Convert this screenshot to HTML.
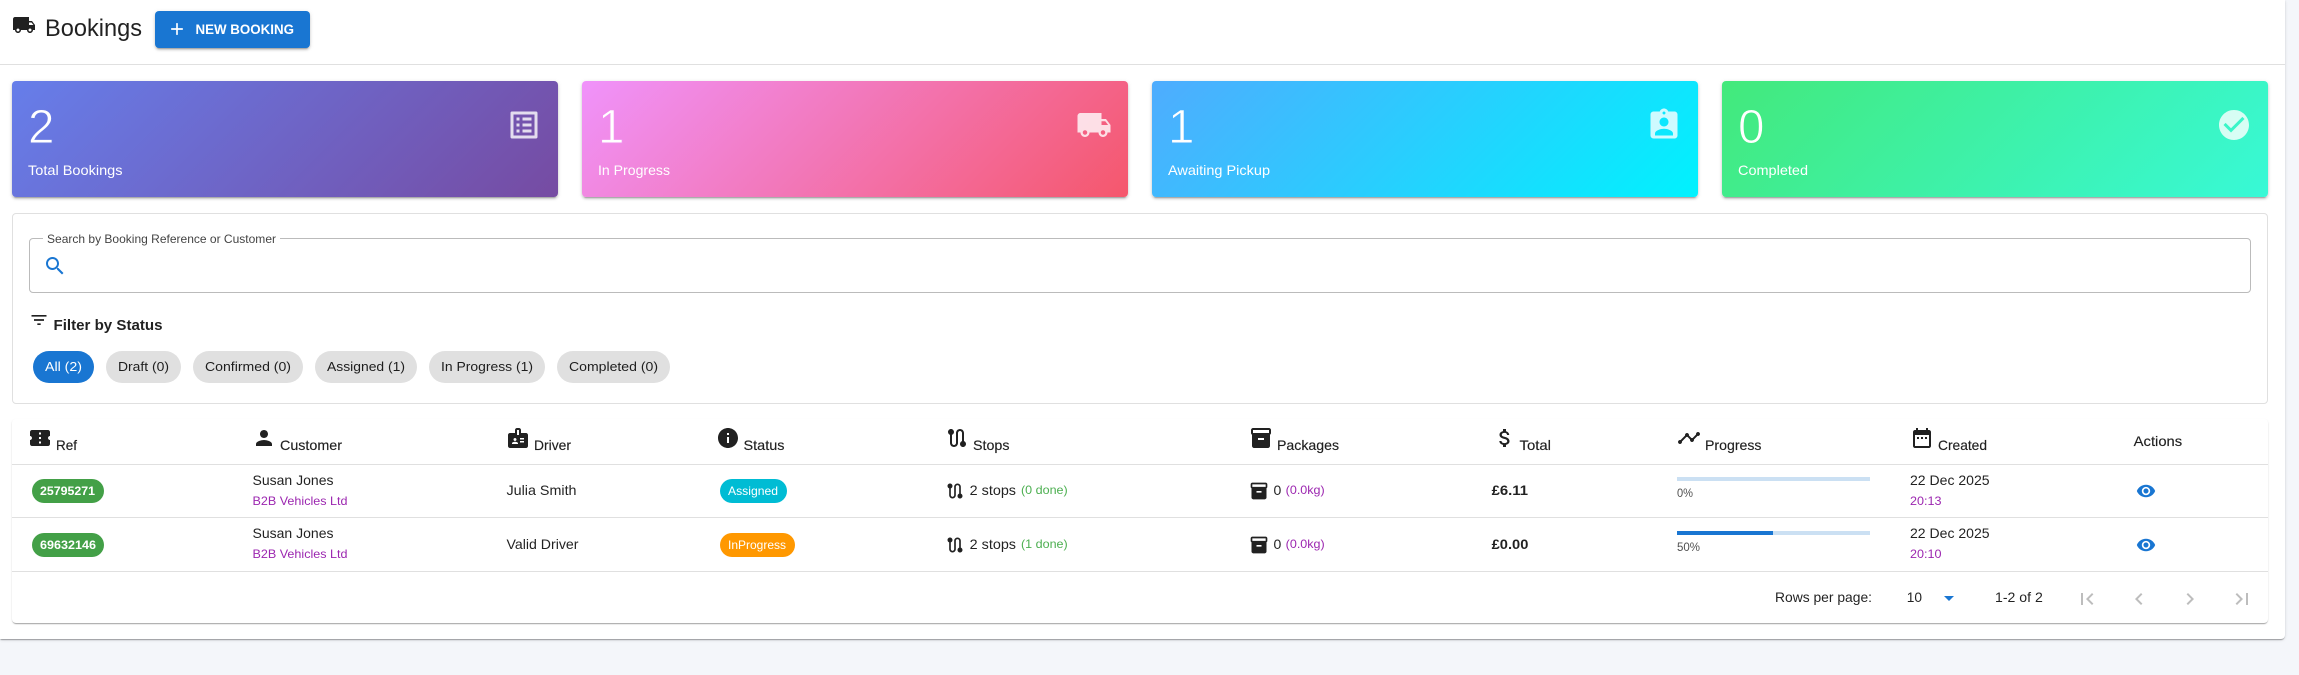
<!DOCTYPE html>
<html lang="en">
<head>
<meta charset="utf-8">
<title>Bookings</title>
<style>
html,body{margin:0;padding:0;width:2299px;height:675px;overflow:hidden;background:#f4f6fa;font-family:"Liberation Sans",sans-serif}
.b{position:absolute;box-sizing:border-box}
.panel{left:0;top:0;width:2285px;height:639px;background:#fff;border-radius:0 0 4px 0;box-shadow:0 2px 1px -1px rgba(0,0,0,.2),0 1px 1px rgba(0,0,0,.14),0 1px 3px rgba(0,0,0,.12)}
.line{background:#e0e0e0;height:1px}
.btn{left:155px;top:11px;width:155px;height:37px;background:#1976d2;border-radius:4px;box-shadow:0 3px 1px -2px rgba(0,0,0,.2),0 2px 2px rgba(0,0,0,.14),0 1px 5px rgba(0,0,0,.12)}
.card{top:81px;height:116px;width:546px;border-radius:4px;box-shadow:0 3px 1px -2px rgba(0,0,0,.2),0 2px 2px rgba(0,0,0,.14),0 1px 5px rgba(0,0,0,.12)}
.filter{left:12px;top:213px;width:2256px;height:191px;border:1px solid #e0e0e0;border-radius:4px}
.search{left:29px;top:238px;width:2222px;height:55px;border:1px solid #bbb;border-radius:4px}
.notch{left:43px;top:236px;width:237px;height:5px;background:#fff}
.chip{top:351px;height:32px;border-radius:16px;background:#e0e0e0}
.table{left:12px;top:419px;width:2256px;height:204px;background:#fff;border-radius:4px;box-shadow:0 2px 1px -1px rgba(0,0,0,.2),0 1px 1px rgba(0,0,0,.14),0 1px 2px rgba(0,0,0,.08)}
.pill{height:24px;border-radius:12px}
.track{left:1677px;width:193px;height:4px;background:#cbe0f3}
svg{position:absolute;left:0;top:0}
text{font-family:"Liberation Sans",sans-serif;fill:rgba(0,0,0,.87)}
.wh{fill:#fff}
.th{font-size:14px;font-weight:400;stroke:rgba(0,0,0,.5);stroke-width:.25px}
.td{font-size:14px}
.sm{font-size:12px}
.pu{font-size:12px;fill:#9c27b0}
.gr{font-size:12px;fill:#4caf50}
.ch{font-size:13px}
.ic{fill:rgba(0,0,0,.87)}
.ci{fill:#fff;fill-opacity:.8}
.bl{fill:#1976d2}
.gy{fill:#bdbdbd}
.num{font-size:48px;fill:#fff;stroke-width:.9px;paint-order:fill}
</style>
</head>
<body>
<div class="b panel"></div>
<div class="b line" style="left:0;top:64px;width:2285px"></div>
<div class="b btn"></div>
<div class="b card" style="left:12px;background:linear-gradient(135deg,#667eea,#764ba2)"></div>
<div class="b card" style="left:582px;background:linear-gradient(135deg,#f093fb,#f5576c)"></div>
<div class="b card" style="left:1152px;background:linear-gradient(135deg,#4facfe,#00f2fe)"></div>
<div class="b card" style="left:1722px;background:linear-gradient(135deg,#43e97b,#38f9d7)"></div>
<div class="b filter"></div>
<div class="b search"></div>
<div class="b notch"></div>
<div class="b chip" style="left:33px;width:61px;background:#1976d2"></div>
<div class="b chip" style="left:106px;width:75px"></div>
<div class="b chip" style="left:193px;width:110px"></div>
<div class="b chip" style="left:315px;width:102px"></div>
<div class="b chip" style="left:429px;width:116px"></div>
<div class="b chip" style="left:557px;width:113px"></div>
<div class="b table"></div>
<div class="b line" style="left:12px;top:464px;width:2256px"></div>
<div class="b line" style="left:12px;top:517px;width:2256px"></div>
<div class="b line" style="left:12px;top:571px;width:2256px"></div>
<div class="b pill" style="left:32px;top:479px;width:72px;background:#43a047"></div>
<div class="b pill" style="left:32px;top:533px;width:72px;background:#43a047"></div>
<div class="b pill" style="left:720px;top:479px;width:67px;background:#00bcd4"></div>
<div class="b pill" style="left:720px;top:533px;width:75px;background:#ff9800"></div>
<div class="b track" style="top:477px"></div>
<div class="b track" style="top:531px"></div>
<div class="b" style="left:1677px;top:531px;width:96px;height:4px;background:#1976d2"></div>

<svg width="2299" height="675" viewBox="0 0 2299 675" xmlns="http://www.w3.org/2000/svg">
<defs>
<symbol id="truck" viewBox="0 0 24 24"><path d="M20 8h-3V4H3c-1.1 0-2 .9-2 2v11h2c0 1.66 1.34 3 3 3s3-1.34 3-3h6c0 1.66 1.34 3 3 3s3-1.34 3-3h2v-5l-3-4zM6 18.5c-.83 0-1.5-.67-1.5-1.5s.67-1.5 1.5-1.5 1.5.67 1.5 1.5-.67 1.5-1.5 1.5zm13.5-9 1.96 2.5H17V9.5h2.5zm-1.5 9c-.83 0-1.5-.67-1.5-1.5s.67-1.5 1.5-1.5 1.5.67 1.5 1.5-.67 1.5-1.5 1.5z"/></symbol>
<symbol id="plus" viewBox="0 0 24 24"><path d="M19 13h-6v6h-2v-6H5v-2h6V5h2v6h6v2z"/></symbol>
<symbol id="list" viewBox="0 0 24 24"><path d="M19 5v14H5V5h14m1.1-2H3.9c-.5 0-.9.4-.9.9v16.2c0 .4.4.9.9.9h16.2c.4 0 .9-.5.9-.9V3.9c0-.5-.5-.9-.9-.9zM11 7h6v2h-6V7zm0 4h6v2h-6v-2zm0 4h6v2h-6zM7 7h2v2H7zm0 4h2v2H7zm0 4h2v2H7z"/></symbol>
<symbol id="assign" viewBox="0 0 24 24"><path d="M19 3h-4.18C14.4 1.84 13.3 1 12 1c-1.3 0-2.4.84-2.82 2H5c-1.1 0-2 .9-2 2v14c0 1.1.9 2 2 2h14c1.1 0 2-.9 2-2V5c0-1.1-.9-2-2-2zm-7 0c.55 0 1 .45 1 1s-.45 1-1 1-1-.45-1-1 .45-1 1-1zm0 4c1.66 0 3 1.34 3 3s-1.34 3-3 3-3-1.34-3-3 1.34-3 3-3zm6 12H6v-1.4c0-2 4-3.1 6-3.1s6 1.1 6 3.1V19z"/></symbol>
<symbol id="check" viewBox="0 0 24 24"><path d="M12 2C6.48 2 2 6.48 2 12s4.48 10 10 10 10-4.48 10-10S17.52 2 12 2zm-2 15l-5-5 1.41-1.41L10 14.17l7.59-7.59L19 8l-9 9z"/></symbol>
<symbol id="search" viewBox="0 0 24 24"><path d="M15.5 14h-.79l-.28-.27C15.41 12.59 16 11.11 16 9.5 16 5.91 13.09 3 9.5 3S3 5.91 3 9.5 5.91 16 9.5 16c1.61 0 3.09-.59 4.23-1.57l.27.28v.79l5 4.99L20.49 19l-4.99-5zm-6 0C7.01 14 5 11.99 5 9.5S7.01 5 9.5 5 14 7.01 14 9.5 11.99 14 9.5 14z"/></symbol>
<symbol id="filter" viewBox="0 0 24 24"><path d="M10 18h4v-2h-4v2zM3 6v2h18V6H3zm3 7h12v-2H6v2z"/></symbol>
<symbol id="ticket" viewBox="0 0 24 24"><path d="M22 10V6c0-1.11-.9-2-2-2H4c-1.1 0-1.99.89-1.99 2v4c1.1 0 1.99.9 1.99 2s-.89 2-2 2v4c0 1.1.9 2 2 2h16c1.1 0 2-.9 2-2v-4c-1.1 0-2-.9-2-2s.9-2 2-2zm-9 7.5h-2v-2h2v2zm0-4.5h-2v-2h2v2zm0-4.5h-2v-2h2v2z"/></symbol>
<symbol id="person" viewBox="0 0 24 24"><path d="M12 12c2.21 0 4-1.79 4-4s-1.79-4-4-4-4 1.79-4 4 1.79 4 4 4zm0 2c-2.67 0-8 1.34-8 4v2h16v-2c0-2.66-5.33-4-8-4z"/></symbol>
<symbol id="badge" viewBox="0 0 24 24"><path d="M20 7h-5V4c0-1.1-.9-2-2-2h-2c-1.1 0-2 .9-2 2v3H4c-1.1 0-2 .9-2 2v11c0 1.1.9 2 2 2h16c1.1 0 2-.9 2-2V9c0-1.1-.9-2-2-2zM9 12c.83 0 1.5.67 1.5 1.5S9.83 15 9 15s-1.5-.67-1.5-1.5S8.17 12 9 12zm3 6H6v-.75c0-1 2-1.5 3-1.5s3 .5 3 1.5V18zm1-9h-2V4h2v5zm5 7.5h-4V15h4v1.5zm0-3h-4V12h4v1.5z"/></symbol>
<symbol id="info" viewBox="0 0 24 24"><path d="M12 2C6.48 2 2 6.48 2 12s4.48 10 10 10 10-4.48 10-10S17.52 2 12 2zm1 15h-2v-6h2v6zm0-8h-2V7h2v2z"/></symbol>
<symbol id="route" viewBox="0 0 24 24"><path d="M19 15.18V7c0-2.21-1.79-4-4-4s-4 1.79-4 4v10c0 1.1-.9 2-2 2s-2-.9-2-2V8.82C8.16 8.4 9 7.3 9 6c0-1.66-1.34-3-3-3S3 4.34 3 6c0 1.3.84 2.4 2 2.82V17c0 2.21 1.79 4 4 4s4-1.79 4-4V7c0-1.1.9-2 2-2s2 .9 2 2v8.18c-1.16.41-2 1.51-2 2.82 0 1.66 1.34 3 3 3s3-1.34 3-3c0-1.3-.84-2.4-2-2.82z"/></symbol>
<symbol id="box" viewBox="0 0 24 24"><path d="M20 2H4c-1 0-2 .9-2 2v3.01c0 .72.43 1.34 1 1.69V20c0 1.1 1.1 2 2 2h14c.9 0 2-.9 2-2V8.7c.57-.35 1-.97 1-1.69V4c0-1.1-1-2-2-2zm-5 12H9v-2h6v2zm5-7H4V4l16-.02V7z"/></symbol>
<symbol id="money" viewBox="0 0 24 24"><path d="M11.8 10.9c-2.27-.59-3-1.2-3-2.15 0-1.09 1.01-1.85 2.7-1.85 1.78 0 2.44.85 2.5 2.1h2.21c-.07-1.72-1.12-3.3-3.21-3.81V3h-3v2.16c-1.94.42-3.5 1.68-3.5 3.61 0 2.31 1.91 3.46 4.7 4.13 2.5.6 3 1.48 3 2.41 0 .69-.49 1.79-2.7 1.79-2.06 0-2.87-.92-2.98-2.1h-2.2c.12 2.19 1.76 3.42 3.68 3.83V21h3v-2.15c1.95-.37 3.5-1.5 3.5-3.55 0-2.84-2.43-3.81-4.7-4.4z"/></symbol>
<symbol id="timeline" viewBox="0 0 24 24"><path d="M23 8c0 1.1-.9 2-2 2-.18 0-.35-.02-.51-.07l-3.56 3.55c.05.16.07.34.07.52 0 1.1-.9 2-2 2s-2-.9-2-2c0-.18.02-.36.07-.52l-2.55-2.55c-.16.05-.34.07-.52.07s-.36-.02-.52-.07l-4.55 4.56c.05.16.07.33.07.51 0 1.1-.9 2-2 2s-2-.9-2-2 .9-2 2-2c.18 0 .35.02.51.07l4.56-4.55C8.02 9.36 8 9.18 8 9c0-1.1.9-2 2-2s2 .9 2 2c0 .18-.02.36-.07.52l2.55 2.55c.16-.05.34-.07.52-.07s.36.02.52.07l3.55-3.56C19.02 8.35 19 8.18 19 8c0-1.1.9-2 2-2s2 .9 2 2z"/></symbol>
<symbol id="date" viewBox="0 0 24 24"><path d="M9 11H7v2h2v-2zm4 0h-2v2h2v-2zm4 0h-2v2h2v-2zm2-7h-1V2h-2v2H8V2H6v2H5c-1.11 0-1.99.9-1.99 2L3 20c0 1.1.89 2 2 2h14c1.1 0 2-.9 2-2V6c0-1.1-.9-2-2-2zm0 16H5V9h14v11z"/></symbol>
<symbol id="eye" viewBox="0 0 24 24"><path d="M12 4.5C7 4.5 2.73 7.61 1 12c1.73 4.39 6 7.5 11 7.5s9.27-3.11 11-7.5c-1.73-4.39-6-7.5-11-7.5zM12 17c-2.76 0-5-2.24-5-5s2.24-5 5-5 5 2.24 5 5-2.24 5-5 5zm0-8c-1.66 0-3 1.34-3 3s1.34 3 3 3 3-1.34 3-3-1.34-3-3-3z"/></symbol>
<symbol id="first" viewBox="0 0 24 24"><path d="M18.41 16.59 13.82 12l4.59-4.59L17 6l-6 6 6 6zM6 6h2v12H6z"/></symbol>
<symbol id="prev" viewBox="0 0 24 24"><path d="M15.41 7.41 14 6l-6 6 6 6 1.41-1.41L10.83 12z"/></symbol>
<symbol id="next" viewBox="0 0 24 24"><path d="M10 6 8.59 7.41 13.17 12l-4.58 4.59L10 18l6-6z"/></symbol>
<symbol id="last" viewBox="0 0 24 24"><path d="M5.59 7.41 10.18 12l-4.59 4.59L7 18l6-6-6-6zM16 6h2v12h-2z"/></symbol>
</defs>

<!-- header -->
<use href="#truck" x="12" y="13" width="24" height="24" class="ic"/>
<text x="45" y="36" font-size="24" textLength="97" lengthAdjust="spacingAndGlyphs">Bookings</text>
<use href="#plus" x="167" y="19" width="20" height="20" class="wh"/>
<text x="195.5" y="34" font-size="13.5" font-weight="700" class="wh" textLength="98.5" lengthAdjust="spacingAndGlyphs">NEW BOOKING</text>

<!-- stat cards -->
<text x="28" y="143" class="num" stroke="#6b7ce2" textLength="26.5" lengthAdjust="spacingAndGlyphs">2</text>
<text x="598" y="143" class="num" stroke="#f18fed" textLength="26.5" lengthAdjust="spacingAndGlyphs">1</text>
<text x="1168" y="143" class="num" stroke="#49b2fe" textLength="26.5" lengthAdjust="spacingAndGlyphs">1</text>
<text x="1738" y="143" class="num" stroke="#42eb83" textLength="26.5" lengthAdjust="spacingAndGlyphs">0</text>
<text x="28" y="175" font-size="14" class="wh" textLength="94.5" lengthAdjust="spacingAndGlyphs">Total Bookings</text>
<text x="598" y="175" font-size="14" class="wh" textLength="72" lengthAdjust="spacingAndGlyphs">In Progress</text>
<text x="1168" y="175" font-size="14" class="wh" textLength="102" lengthAdjust="spacingAndGlyphs">Awaiting Pickup</text>
<text x="1738" y="175" font-size="14" class="wh" textLength="70" lengthAdjust="spacingAndGlyphs">Completed</text>
<use href="#list" x="506" y="107" width="36" height="36" class="ci"/>
<use href="#truck" x="1076" y="107" width="36" height="36" class="ci"/>
<use href="#assign" x="1646" y="107" width="36" height="36" class="ci"/>
<use href="#check" x="2216" y="107" width="36" height="36" class="ci"/>

<!-- search + filter -->
<text x="47" y="243" class="sm" textLength="229" lengthAdjust="spacingAndGlyphs" style="fill:rgba(0,0,0,.75)">Search by Booking Reference or Customer</text>
<use href="#search" x="43" y="254" width="24" height="24" class="bl"/>
<use href="#filter" x="29" y="310" width="20" height="20" class="ic"/>
<text x="53.5" y="330" font-size="15" font-weight="700" textLength="109" lengthAdjust="spacingAndGlyphs">Filter by Status</text>
<text x="45" y="371" class="ch wh" textLength="37" lengthAdjust="spacingAndGlyphs">All (2)</text>
<text x="118" y="371" class="ch" textLength="51" lengthAdjust="spacingAndGlyphs">Draft (0)</text>
<text x="205" y="371" class="ch" textLength="86" lengthAdjust="spacingAndGlyphs">Confirmed (0)</text>
<text x="327" y="371" class="ch" textLength="78" lengthAdjust="spacingAndGlyphs">Assigned (1)</text>
<text x="441" y="371" class="ch" textLength="92" lengthAdjust="spacingAndGlyphs">In Progress (1)</text>
<text x="569" y="371" class="ch" textLength="89" lengthAdjust="spacingAndGlyphs">Completed (0)</text>

<!-- table head -->
<use href="#ticket" x="28" y="426" width="24" height="24" class="ic"/>
<text x="56" y="450" class="th" textLength="21" lengthAdjust="spacingAndGlyphs">Ref</text>
<use href="#person" x="252" y="426" width="24" height="24" class="ic"/>
<text x="280" y="450" class="th" textLength="62" lengthAdjust="spacingAndGlyphs">Customer</text>
<use href="#badge" x="506" y="426" width="24" height="24" class="ic"/>
<text x="534" y="450" class="th" textLength="37" lengthAdjust="spacingAndGlyphs">Driver</text>
<use href="#info" x="716" y="426" width="24" height="24" class="ic"/>
<text x="743.5" y="450" class="th" textLength="41" lengthAdjust="spacingAndGlyphs">Status</text>
<use href="#route" x="945" y="426" width="24" height="24" class="ic"/>
<text x="973" y="450" class="th" textLength="36.5" lengthAdjust="spacingAndGlyphs">Stops</text>
<use href="#box" x="1249" y="426" width="24" height="24" class="ic"/>
<text x="1277" y="450" class="th" textLength="62" lengthAdjust="spacingAndGlyphs">Packages</text>
<use href="#money" x="1493" y="426" width="24" height="24" class="ic"/>
<text x="1519.5" y="450" class="th" textLength="31.5" lengthAdjust="spacingAndGlyphs">Total</text>
<use href="#timeline" x="1677" y="426" width="24" height="24" class="ic"/>
<text x="1705" y="450" class="th" textLength="56.5" lengthAdjust="spacingAndGlyphs">Progress</text>
<use href="#date" x="1910" y="426" width="24" height="24" class="ic"/>
<text x="1938" y="450" class="th" textLength="49" lengthAdjust="spacingAndGlyphs">Created</text>
<text x="2133.7" y="446" class="th" textLength="48.5" lengthAdjust="spacingAndGlyphs">Actions</text>

<!-- row 1 -->
<text x="40" y="495" class="sm wh" font-weight="700" textLength="55" lengthAdjust="spacingAndGlyphs">25795271</text>
<text x="252.5" y="485" class="td" textLength="81" lengthAdjust="spacingAndGlyphs">Susan Jones</text>
<text x="252.5" y="505" class="pu" textLength="95" lengthAdjust="spacingAndGlyphs">B2B Vehicles Ltd</text>
<text x="506.5" y="495" class="td" textLength="70" lengthAdjust="spacingAndGlyphs">Julia Smith</text>
<text x="728" y="495" class="sm wh" textLength="50" lengthAdjust="spacingAndGlyphs">Assigned</text>
<use href="#route" x="945" y="481" width="20" height="20" class="ic"/>
<text x="969.7" y="495" class="td" textLength="46.3" lengthAdjust="spacingAndGlyphs">2 stops</text>
<text x="1021" y="494" class="gr" textLength="46.7" lengthAdjust="spacingAndGlyphs">(0 done)</text>
<use href="#box" x="1249" y="481" width="20" height="20" class="ic"/>
<text x="1273.5" y="495" class="td" textLength="7.8" lengthAdjust="spacingAndGlyphs">0</text>
<text x="1285.7" y="494" class="pu" textLength="39" lengthAdjust="spacingAndGlyphs">(0.0kg)</text>
<text x="1491.6" y="495" class="td" font-weight="700" textLength="36.4" lengthAdjust="spacingAndGlyphs">£6.11</text>
<text x="1677" y="497" class="sm" textLength="16" lengthAdjust="spacingAndGlyphs" style="fill:rgba(0,0,0,.7)">0%</text>
<text x="1910" y="485" class="td" textLength="79.6" lengthAdjust="spacingAndGlyphs">22 Dec 2025</text>
<text x="1910" y="505" class="pu" textLength="31.5" lengthAdjust="spacingAndGlyphs">20:13</text>
<use href="#eye" x="2136" y="481" width="20" height="20" class="bl"/>

<!-- row 2 -->
<text x="40" y="549" class="sm wh" font-weight="700" textLength="56" lengthAdjust="spacingAndGlyphs">69632146</text>
<text x="252.5" y="538" class="td" textLength="81" lengthAdjust="spacingAndGlyphs">Susan Jones</text>
<text x="252.5" y="558" class="pu" textLength="95" lengthAdjust="spacingAndGlyphs">B2B Vehicles Ltd</text>
<text x="506.5" y="549" class="td" textLength="72" lengthAdjust="spacingAndGlyphs">Valid Driver</text>
<text x="728" y="549" class="sm wh" textLength="58" lengthAdjust="spacingAndGlyphs">InProgress</text>
<use href="#route" x="945" y="535" width="20" height="20" class="ic"/>
<text x="969.7" y="549" class="td" textLength="46.3" lengthAdjust="spacingAndGlyphs">2 stops</text>
<text x="1021" y="548" class="gr" textLength="46.7" lengthAdjust="spacingAndGlyphs">(1 done)</text>
<use href="#box" x="1249" y="535" width="20" height="20" class="ic"/>
<text x="1273.5" y="549" class="td" textLength="7.8" lengthAdjust="spacingAndGlyphs">0</text>
<text x="1285.7" y="548" class="pu" textLength="39" lengthAdjust="spacingAndGlyphs">(0.0kg)</text>
<text x="1491.6" y="549" class="td" font-weight="700" textLength="36.8" lengthAdjust="spacingAndGlyphs">£0.00</text>
<text x="1677" y="551" class="sm" textLength="23" lengthAdjust="spacingAndGlyphs" style="fill:rgba(0,0,0,.7)">50%</text>
<text x="1910" y="538" class="td" textLength="79.6" lengthAdjust="spacingAndGlyphs">22 Dec 2025</text>
<text x="1910" y="558" class="pu" textLength="31.5" lengthAdjust="spacingAndGlyphs">20:10</text>
<use href="#eye" x="2136" y="535" width="20" height="20" class="bl"/>

<!-- pagination -->
<text x="1775" y="602" class="td" textLength="97" lengthAdjust="spacingAndGlyphs">Rows per page:</text>
<text x="1906.7" y="602" class="td" textLength="15.3" lengthAdjust="spacingAndGlyphs">10</text>
<path d="M1944 596h10l-5 5z" class="bl"/>
<text x="1995" y="602" class="td" textLength="47.8" lengthAdjust="spacingAndGlyphs">1-2 of 2</text>
<use href="#first" x="2075" y="587" width="24" height="24" class="gy"/>
<use href="#prev" x="2127" y="587" width="24" height="24" class="gy"/>
<use href="#next" x="2178" y="587" width="24" height="24" class="gy"/>
<use href="#last" x="2230" y="587" width="24" height="24" class="gy"/>
</svg>
</body>
</html>
